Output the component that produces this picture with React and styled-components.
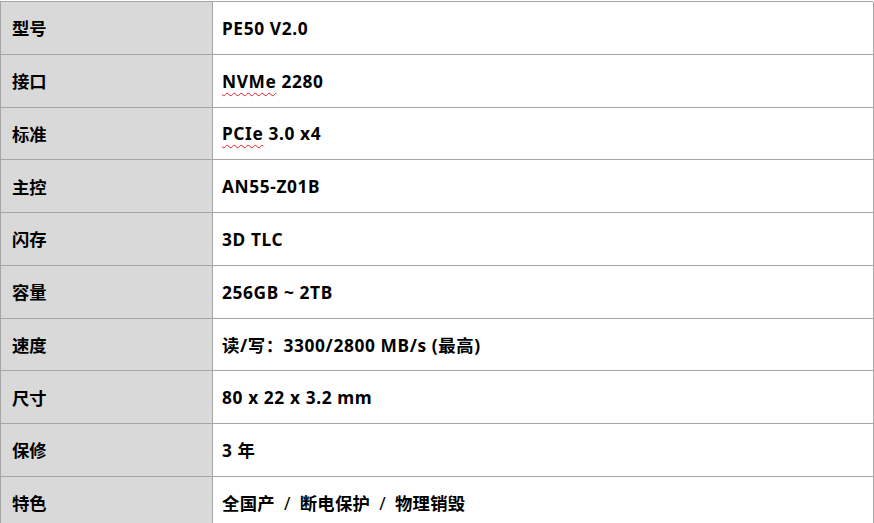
import React from "react";
import styled, { createGlobalStyle } from "styled-components";

const specs = [
  { label: "型号", value: ["PE50 V2.0"] },
  { label: "接口", value: ["NVMe 2280"], flagged: "NVMe" },
  { label: "标准", value: ["PCIe 3.0 x4"], flagged: "PCIe" },
  { label: "主控", value: ["AN55-Z01B"] },
  { label: "闪存", value: ["3D TLC"] },
  { label: "容量", value: ["256GB ~ 2TB"] },
  { label: "速度", value: ["读/写：3300/2800 MB/s (最高)"] },
  { label: "尺寸", value: ["80 x 22 x 3.2 mm"] },
  { label: "保修", value: ["3 年"] },
  { label: "特色", value: ["全国产", "断电保护", "物理销毁"], cjk: true },
];

function Value({ row }) {
  if (row.flagged) {
    return (
      <span>
        <Flagged>{row.flagged}</Flagged>
        {row.value[0].slice(row.flagged.length)}
      </span>
    );
  }
  return (
    <span>
      {row.value.map((part, i) => (
        <React.Fragment key={part}>
          {i > 0 && <Sep>/</Sep>}
          {part}
        </React.Fragment>
      ))}
    </span>
  );
}

export default function App() {
  return (
    <>
      <GlobalStyle />
      <Page>
        <SpecTable>
          {specs.map((row) => (
            <React.Fragment key={row.label}>
              <LabelCell>{row.label}</LabelCell>
              <ValueCell $cjk={row.cjk}>
                <Value row={row} />
              </ValueCell>
            </React.Fragment>
          ))}
        </SpecTable>
      </Page>
    </>
  );
}

const GlobalStyle = createGlobalStyle`
  body {
    margin: 0;
    background: #fff;
    font-family: "Noto Sans", "Noto Sans CJK SC", sans-serif;
  }
`;

const Page = styled.div`
  width: 874px;
  height: 523px;
  overflow: hidden;
  padding-top: 1px;
  box-sizing: border-box;
`;

const SpecTable = styled.div`
  display: grid;
  grid-template-columns: 212px 661px;
  grid-auto-rows: 52.75px;
  border-top: 1px solid #a6a6a6;
  border-left: 1px solid #a6a6a6;
  width: 873px;
  box-sizing: border-box;
`;

const Cell = styled.div`
  display: flex;
  align-items: center;
  box-sizing: border-box;
  border-right: 1px solid #a6a6a6;
  border-bottom: 1px solid #a6a6a6;
  font-size: 17.33px;
  font-weight: 700;
  color: #000;
  white-space: pre;
`;

const LabelCell = styled(Cell)`
  background: #d9d9d9;
  padding-left: 11px;
`;

const ValueCell = styled(Cell)`
  background: #fff;
  padding-left: 9px;
  letter-spacing: ${(p) => (p.$cjk ? "0.3px" : "0.6px")};
`;

const Flagged = styled.span`
  text-decoration: underline wavy #e02020;
  text-decoration-thickness: 1px;
  text-underline-offset: 4px;
`;

const Sep = styled.span`
  display: inline-block;
  padding: 0 9px;
  font-weight: 400;
`;
